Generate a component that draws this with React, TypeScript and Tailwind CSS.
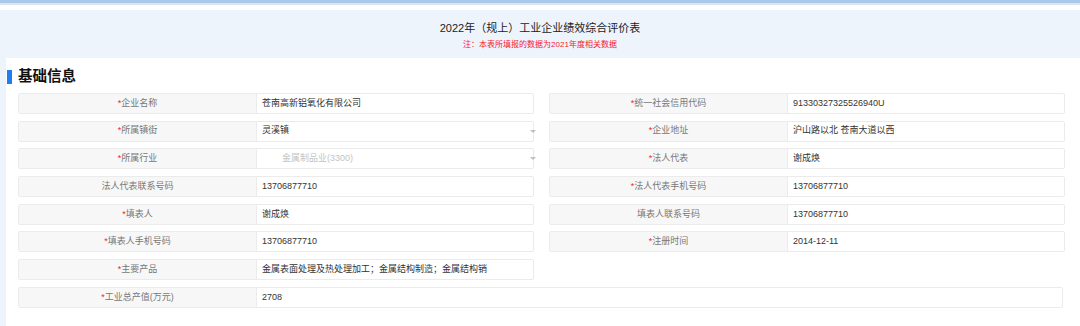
import type { ReactNode } from "react";

type Field = {
  label: string;
  value: string;
  required?: boolean;
  select?: boolean;
  disabled?: boolean;
};

const left: Field[] = [
  { label: "企业名称", value: "苍南高新铝氧化有限公司", required: true },
  { label: "所属镇街", value: "灵溪镇", required: true, select: true },
  { label: "所属行业", value: "金属制品业(3300)", required: true, select: true, disabled: true },
  { label: "法人代表联系号码", value: "13706877710" },
  { label: "填表人", value: "谢成焕", required: true },
  { label: "填表人手机号码", value: "13706877710", required: true },
  { label: "主要产品", value: "金属表面处理及热处理加工；金属结构制造；金属结构销", required: true },
];

const right: Field[] = [
  { label: "统一社会信用代码", value: "91330327325526940U", required: true },
  { label: "企业地址", value: "沪山路以北 苍南大道以西", required: true },
  { label: "法人代表", value: "谢成焕", required: true },
  { label: "法人代表手机号码", value: "13706877710", required: true },
  { label: "填表人联系号码", value: "13706877710" },
  { label: "注册时间", value: "2014-12-11", required: true },
];

const Row = ({ f, wide }: { f: Field; wide?: boolean }) => (
  <div
    className={`relative flex h-[21px] border border-[#ebebeb] rounded-[2px] ${
      wide ? "w-[1045px]" : "w-[516px]"
    }`}
  >
    <div className="w-[238px] shrink-0 flex items-center justify-center bg-[#f7f7f7] border-r border-[#ebebeb] text-[9px] text-[#777]">
      {f.required && <span className="text-[#f5222d]">*</span>}
      {f.label}
    </div>
    <div
      className={`flex-1 flex items-center text-[9px] ${
        f.disabled ? "pl-[25px] text-[#c4c4c4]" : "pl-[5px] text-[#333]"
      }`}
    >
      {f.value}
    </div>
    {f.select && (
      <div className="absolute right-[-3px] top-[8px] w-0 h-0 border-l-[3px] border-r-[3px] border-t-[3px] border-l-transparent border-r-transparent border-t-[#c0c0c0]" />
    )}
  </div>
);

const Column = ({ children }: { children: ReactNode }) => (
  <div className="flex flex-col gap-[6.7px]">{children}</div>
);

export default function App() {
  return (
    <div
      className="w-[1080px] h-[326px] overflow-hidden bg-[#eef4fc]"
      style={{ fontFamily: '"Liberation Sans", "Noto Sans CJK SC", sans-serif' }}
    >
      <div className="h-[3px] bg-[#a9c9ea]" />
      <div className="h-[2px] bg-[#dfe4ea]" />
      <div className="h-[5px] bg-white" />

      <div className="h-[48px] flex flex-col items-center pt-[11px]">
        <h1 className="text-[11px] leading-[14px] text-[#222]">2022年（规上）工业企业绩效综合评价表</h1>
        <p className="mt-[5px] text-[8px] leading-[10px] text-[#f5222d]">注：本表所填报的数据为2021年度相关数据</p>
      </div>

      <div className="ml-[6px] h-[268px] bg-white pt-[12px] pl-[12px]">
        <div className="flex items-center h-[14px] -ml-[11px]">
          <div className="w-[5px] h-[14px] bg-[#1e7ef0]" />
          <h2 className="ml-[6px] text-[14.5px] font-bold text-[#111]">基础信息</h2>
        </div>

        <div className="mt-[9px] flex flex-col gap-[6.7px]">
          <div className="flex gap-[15px] items-start">
            <Column>
              {left.map((f) => (
                <Row key={f.label} f={f} />
              ))}
            </Column>
            <Column>
              {right.map((f) => (
                <Row key={f.label} f={f} />
              ))}
            </Column>
          </div>
          <Row f={{ label: "工业总产值(万元)", value: "2708", required: true }} wide />
        </div>
      </div>
    </div>
  );
}
